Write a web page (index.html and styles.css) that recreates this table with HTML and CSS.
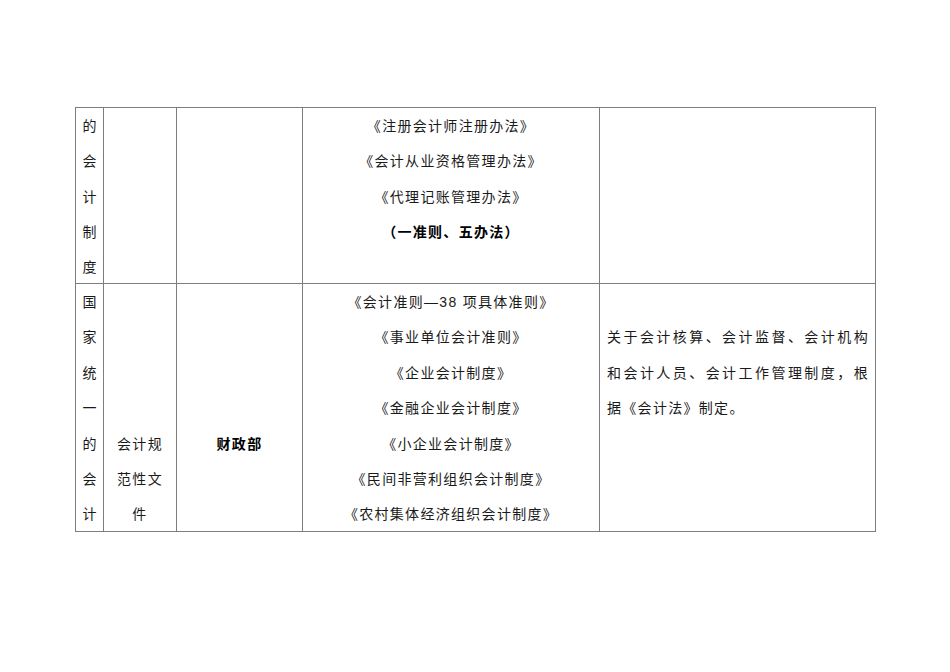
FILE: index.html
```html
<!DOCTYPE html>
<html lang="zh-CN">
<head>
<meta charset="utf-8">
<title>会计制度</title>
<link rel="stylesheet" href="styles.css">
</head>
<body>
<div class="page">
  <table class="grid">
    <colgroup>
      <col class="c1"><col class="c2"><col class="c3"><col class="c4"><col class="c5">
    </colgroup>
    <tr class="r1">
      <td><div class="cell first vert">的<br>会<br>计<br>制<br>度</div></td>
      <td><div class="cell first"></div></td>
      <td><div class="cell first"></div></td>
      <td><div class="cell first center">
        <div>《注册会计师注册办法》</div>
        <div>《会计从业资格管理办法》</div>
        <div>《代理记账管理办法》</div>
        <div class="bold">（一准则、五办法）</div>
      </div></td>
      <td><div class="cell first"></div></td>
    </tr>
    <tr class="r2">
      <td><div class="cell second vert">国<br>家<br>统<br>一<br>的<br>会<br>计</div></td>
      <td><div class="cell second center skip4">会计规<br>范性文<br>件</div></td>
      <td><div class="cell second center skip4 bold">财政部</div></td>
      <td><div class="cell second center">
        <div>《会计准则—38 项具体准则》</div>
        <div>《事业单位会计准则》</div>
        <div>《企业会计制度》</div>
        <div>《金融企业会计制度》</div>
        <div>《小企业会计制度》</div>
        <div>《民间非营利组织会计制度》</div>
        <div>《农村集体经济组织会计制度》</div>
      </div></td>
      <td><div class="cell second desc">
        <div class="just">关于会计核算、会计监督、会计机构</div>
        <div class="just">和会计人员、会计工作管理制度，根</div>
        <div>据《会计法》制定。</div>
      </div></td>
    </tr>
  </table>
</div>
</body>
</html>
```

FILE: styles.css
```css
html, body {
  margin: 0;
  padding: 0;
  background: #ffffff;
}

body {
  font-family: "Liberation Sans", "Noto Sans CJK SC", sans-serif;
  font-size: 14px;
  color: #1a1a1a;
}

.page {
  padding: 107px 0 0 75px;
}

.grid {
  border-collapse: collapse;
  table-layout: fixed;
  width: 801px;
}

.grid td {
  border: 1px solid #7d7d7d;
  padding: 0;
  vertical-align: top;
}

.c1 { width: 28px; }
.c2 { width: 73px; }
.c3 { width: 126px; }
.c4 { width: 297px; }
.c5 { width: 276px; }

.cell {
  line-height: 35.25px;
  letter-spacing: 1.3px;
  overflow: hidden;
  box-sizing: border-box;
}

.cell.first {
  height: 175px;
  padding-top: 1px;
}

.cell.second {
  height: 247px;
  line-height: 35.4px;
  padding-top: 1px;
}

.vert {
  text-align: center;
  letter-spacing: 0;
}

.center {
  text-align: center;
}

.bold {
  font-weight: bold;
  color: #000;
}

.cell.skip4 {
  padding-top: 142.6px;
}

.cell.desc {
  padding: 36.4px 6px 0 7px;
}

.just {
  text-align: justify;
  text-align-last: justify;
}
```
